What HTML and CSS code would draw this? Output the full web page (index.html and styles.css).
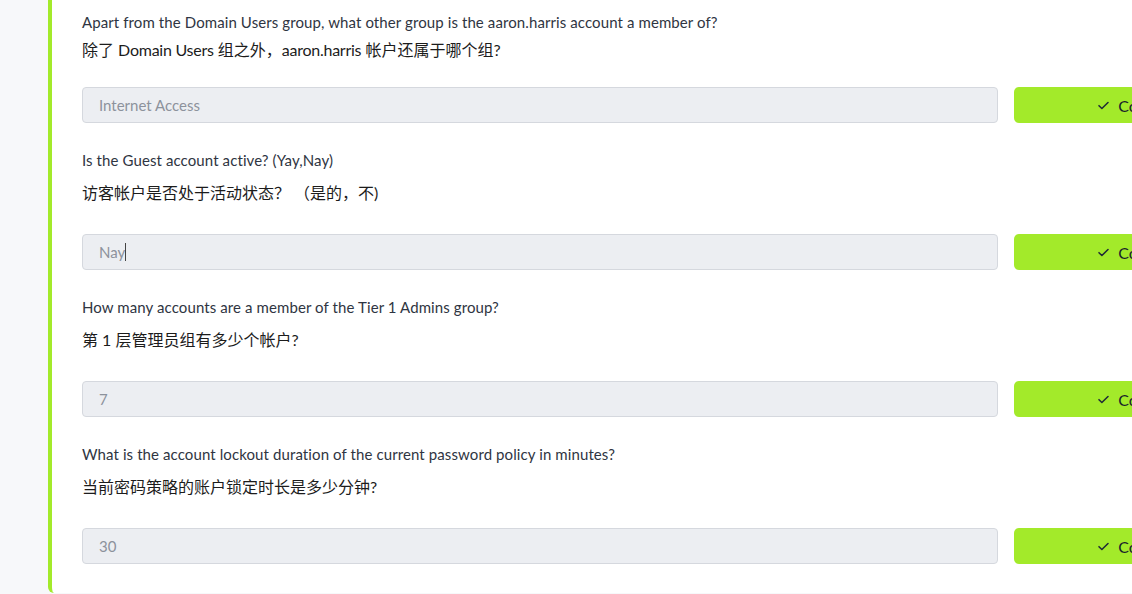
FILE: index.html
```html
<!DOCTYPE html>
<html lang="en">
<head>
<meta charset="utf-8">
<title>Questions</title>
<link rel="stylesheet" href="styles.css">
</head>
<body>
<div class="page">
  <aside class="side"></aside>
  <main class="card">
    <section class="q q-first">
      <p class="q-en">Apart from the Domain Users group, what other group is the aaron.harris account a member of?</p>
      <p class="q-zh">除了 <span class="lat">Domain Users</span> 组之外，<span class="lat">aaron.harris</span> 帐户还属于哪个组?</p>
      <div class="answer-row">
        <div class="answer">Internet Access</div>
        <button class="btn"><svg class="check" viewBox="0 0 12 10" width="11" height="9"><path d="M1 5.2 4.2 8.4 11 1.6" fill="none" stroke="#1f2a37" stroke-width="1.7" stroke-linecap="round" stroke-linejoin="round"/></svg><span>Correct Answer</span></button>
      </div>
    </section>
    <section class="q">
      <p class="q-en">Is the Guest account active? (Yay,Nay)</p>
      <p class="q-zh">访客帐户是否处于活动状态？ （是的，不)</p>
      <div class="answer-row">
        <div class="answer">Nay<span class="caret"></span></div>
        <button class="btn"><svg class="check" viewBox="0 0 12 10" width="11" height="9"><path d="M1 5.2 4.2 8.4 11 1.6" fill="none" stroke="#1f2a37" stroke-width="1.7" stroke-linecap="round" stroke-linejoin="round"/></svg><span>Correct Answer</span></button>
      </div>
    </section>
    <section class="q">
      <p class="q-en">How many accounts are a member of the Tier 1 Admins group?</p>
      <p class="q-zh">第 1 层管理员组有多少个帐户?</p>
      <div class="answer-row">
        <div class="answer">7</div>
        <button class="btn"><svg class="check" viewBox="0 0 12 10" width="11" height="9"><path d="M1 5.2 4.2 8.4 11 1.6" fill="none" stroke="#1f2a37" stroke-width="1.7" stroke-linecap="round" stroke-linejoin="round"/></svg><span>Correct Answer</span></button>
      </div>
    </section>
    <section class="q">
      <p class="q-en">What is the account lockout duration of the current password policy in minutes?</p>
      <p class="q-zh">当前密码策略的账户锁定时长是多少分钟?</p>
      <div class="answer-row">
        <div class="answer">30</div>
        <button class="btn"><svg class="check" viewBox="0 0 12 10" width="11" height="9"><path d="M1 5.2 4.2 8.4 11 1.6" fill="none" stroke="#1f2a37" stroke-width="1.7" stroke-linecap="round" stroke-linejoin="round"/></svg><span>Correct Answer</span></button>
      </div>
    </section>
  </main>
</div>
</body>
</html>
```
FILE: styles.css
```css
html, body {
  margin: 0;
  padding: 0;
  background: #f7f8fa;
  overflow: hidden;
}
body {
  width: 1132px;
  height: 594px;
  font-family: Lato, "Noto Sans CJK SC", sans-serif;
}
.page {
  display: flex;
  width: 1500px;
}
.side {
  width: 48px;
  flex: none;
  background: #f7f8fa;
}
.card {
  width: 1264px;
  flex: none;
  background: #fff;
  border-left: 4px solid #a3ea2a;
  border-bottom-left-radius: 6px;
  padding: 10px 0 4px 30px;
  box-sizing: border-box;
}
.q {
  padding-bottom: 25px;
}
.q-en {
  margin: 0;
  font-size: 15px;
  line-height: 24px;
  letter-spacing: 0.1px;
  color: #2f3542;
}
.q-zh {
  margin: 9px 0 0;
  font-size: 16px;
  line-height: 24px;
  color: #1c1c1c;
  font-family: Lato, "Noto Sans CJK SC", sans-serif;
}
.lat {
  letter-spacing: -0.25px;
}
.q-first .q-zh {
  margin-top: 4px;
}
.answer-row {
  display: flex;
  gap: 16px;
  margin-top: 29px;
}
.q-first .answer-row {
  margin-top: 25px;
}
.answer {
  flex: 1;
  height: 36px;
  box-sizing: border-box;
  border: 1px solid #d5d8de;
  border-radius: 4px;
  background: #eceef2;
  padding: 0 16px;
  display: flex;
  align-items: center;
  font-size: 15px;
  color: #8c929c;
}
.caret {
  display: inline-block;
  width: 1px;
  height: 18px;
  background: #444;
}
.btn {
  width: 298px;
  flex: none;
  height: 36px;
  border: none;
  border-radius: 5px;
  background: #a3ea2a;
  display: flex;
  align-items: center;
  justify-content: center;
  gap: 9px;
  font-family: Lato, sans-serif;
  font-size: 16px;
  color: #1a1f2b;
  padding: 0;
}
.check {
  display: block;
}
```
